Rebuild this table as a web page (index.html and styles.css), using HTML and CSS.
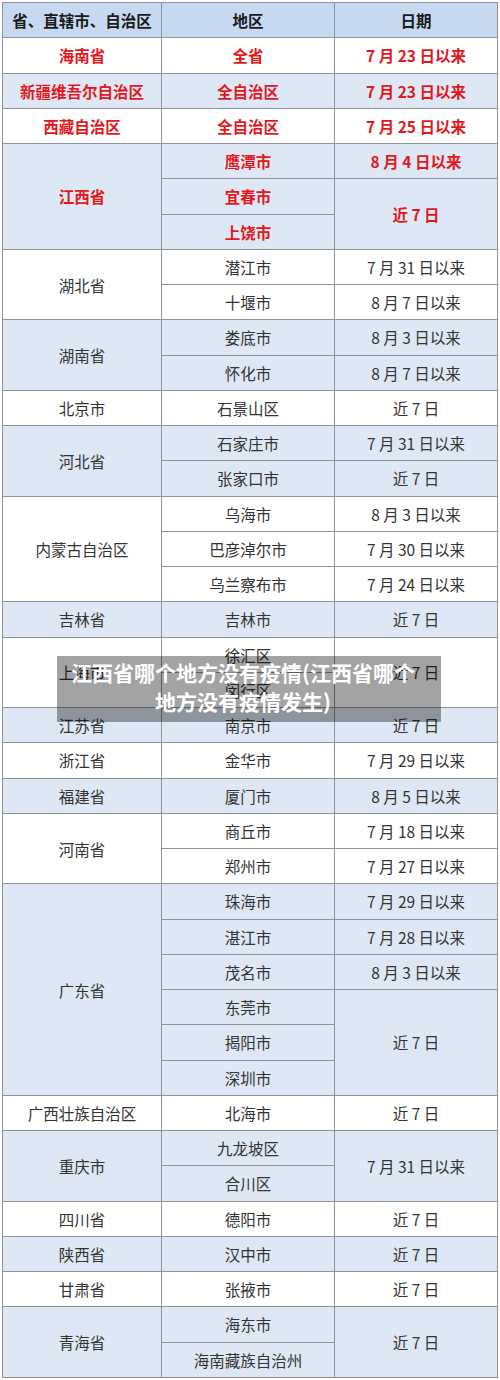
FILE: index.html
```html
<!DOCTYPE html>
<html lang="zh-CN">
<head>
<meta charset="utf-8">
<title>江西省哪个地方没有疫情</title>
<link rel="stylesheet" href="styles.css">
</head>
<body>
<div class="page">
<table class="covid">
  <colgroup><col class="c1"><col class="c2"><col class="c3"></colgroup>
  <thead>
    <tr class="head"><th>省、直辖市、自治区</th><th>地区</th><th>日期</th></tr>
  </thead>
  <tbody>
    <tr class="w red"><td>海南省</td><td>全省</td><td>7 月 23 日以来</td></tr>
    <tr class="b red"><td>新疆维吾尔自治区</td><td>全自治区</td><td>7 月 23 日以来</td></tr>
    <tr class="w red"><td>西藏自治区</td><td>全自治区</td><td>7 月 25 日以来</td></tr>
    <tr class="b red"><td rowspan="3">江西省</td><td>鹰潭市</td><td>8 月 4 日以来</td></tr>
    <tr class="b red"><td>宜春市</td><td rowspan="2">近 7 日</td></tr>
    <tr class="b red"><td>上饶市</td></tr>
    <tr class="w"><td rowspan="2">湖北省</td><td>潜江市</td><td>7 月 31 日以来</td></tr>
    <tr class="w"><td>十堰市</td><td>8 月 7 日以来</td></tr>
    <tr class="b"><td rowspan="2">湖南省</td><td>娄底市</td><td>8 月 3 日以来</td></tr>
    <tr class="b"><td>怀化市</td><td>8 月 7 日以来</td></tr>
    <tr class="w"><td>北京市</td><td>石景山区</td><td>近 7 日</td></tr>
    <tr class="b"><td rowspan="2">河北省</td><td>石家庄市</td><td>7 月 31 日以来</td></tr>
    <tr class="b"><td>张家口市</td><td>近 7 日</td></tr>
    <tr class="w"><td rowspan="3">内蒙古自治区</td><td>乌海市</td><td>8 月 3 日以来</td></tr>
    <tr class="w"><td>巴彦淖尔市</td><td>7 月 30 日以来</td></tr>
    <tr class="w"><td>乌兰察布市</td><td>7 月 24 日以来</td></tr>
    <tr class="b"><td>吉林省</td><td>吉林市</td><td>近 7 日</td></tr>
    <tr class="w"><td rowspan="2">上海市</td><td>徐汇区</td><td rowspan="2">近 7 日</td></tr>
    <tr class="w"><td>闵行区</td></tr>
    <tr class="b"><td>江苏省</td><td>南京市</td><td>近 7 日</td></tr>
    <tr class="w"><td>浙江省</td><td>金华市</td><td>7 月 29 日以来</td></tr>
    <tr class="b"><td>福建省</td><td>厦门市</td><td>8 月 5 日以来</td></tr>
    <tr class="w"><td rowspan="2">河南省</td><td>商丘市</td><td>7 月 18 日以来</td></tr>
    <tr class="w"><td>郑州市</td><td>7 月 27 日以来</td></tr>
    <tr class="b"><td rowspan="6">广东省</td><td>珠海市</td><td>7 月 29 日以来</td></tr>
    <tr class="b"><td>湛江市</td><td>7 月 28 日以来</td></tr>
    <tr class="b"><td>茂名市</td><td>8 月 3 日以来</td></tr>
    <tr class="b"><td>东莞市</td><td rowspan="3">近 7 日</td></tr>
    <tr class="b"><td>揭阳市</td></tr>
    <tr class="b"><td>深圳市</td></tr>
    <tr class="w"><td>广西壮族自治区</td><td>北海市</td><td>近 7 日</td></tr>
    <tr class="b"><td rowspan="2">重庆市</td><td>九龙坡区</td><td rowspan="2">7 月 31 日以来</td></tr>
    <tr class="b"><td>合川区</td></tr>
    <tr class="w"><td>四川省</td><td>德阳市</td><td>近 7 日</td></tr>
    <tr class="b"><td>陕西省</td><td>汉中市</td><td>近 7 日</td></tr>
    <tr class="w"><td>甘肃省</td><td>张掖市</td><td>近 7 日</td></tr>
    <tr class="b"><td rowspan="2">青海省</td><td>海东市</td><td rowspan="2">近 7 日</td></tr>
    <tr class="b"><td>海南藏族自治州</td></tr>
  </tbody>
</table>
<div class="caption">江西省哪个地方没有疫情(江西省哪个地方没有疫情发生)</div>
</div>
</body>
</html>
```

FILE: styles.css
```css
html, body {
  margin: 0;
  padding: 0;
  background: #ffffff;
}
.page {
  position: relative;
  width: 500px;
  height: 1380px;
  padding: 2px 0 0 2px;
  box-sizing: border-box;
}
.covid {
  border-collapse: collapse;
  width: 495px;
  table-layout: fixed;
  font-family: "Noto Sans CJK SC", "Noto Sans", sans-serif;
  font-size: 15.5px;
  color: #333333;
}
.c1 { width: 159px; }
.c2 { width: 173px; }
.c3 { width: 163px; }
.covid th,
.covid td {
  border: 1px solid #8e939b;
  padding: 0;
  text-align: center;
  vertical-align: middle;
  line-height: 20px;
}
.covid tr {
  height: 35.26px;
}
.head th {
  background: #c6d9f0;
  color: #1a1a1a;
  font-weight: bold;
}
.w td { background: #ffffff; }
.b td { background: #dde8f4; }
.red td {
  color: #e3171c;
  font-weight: bold;
}
.caption {
  position: absolute;
  left: 57px;
  top: 656px;
  width: 384px;
  height: 66px;
  box-sizing: border-box;
  padding: 2px 22px 0 10px;
  background: rgba(0, 0, 0, 0.36);
  color: #ffffff;
  font-family: "Noto Sans CJK SC", "Noto Sans", sans-serif;
  font-size: 21px;
  font-weight: bold;
  line-height: 28.5px;
  text-align: center;
}
```
